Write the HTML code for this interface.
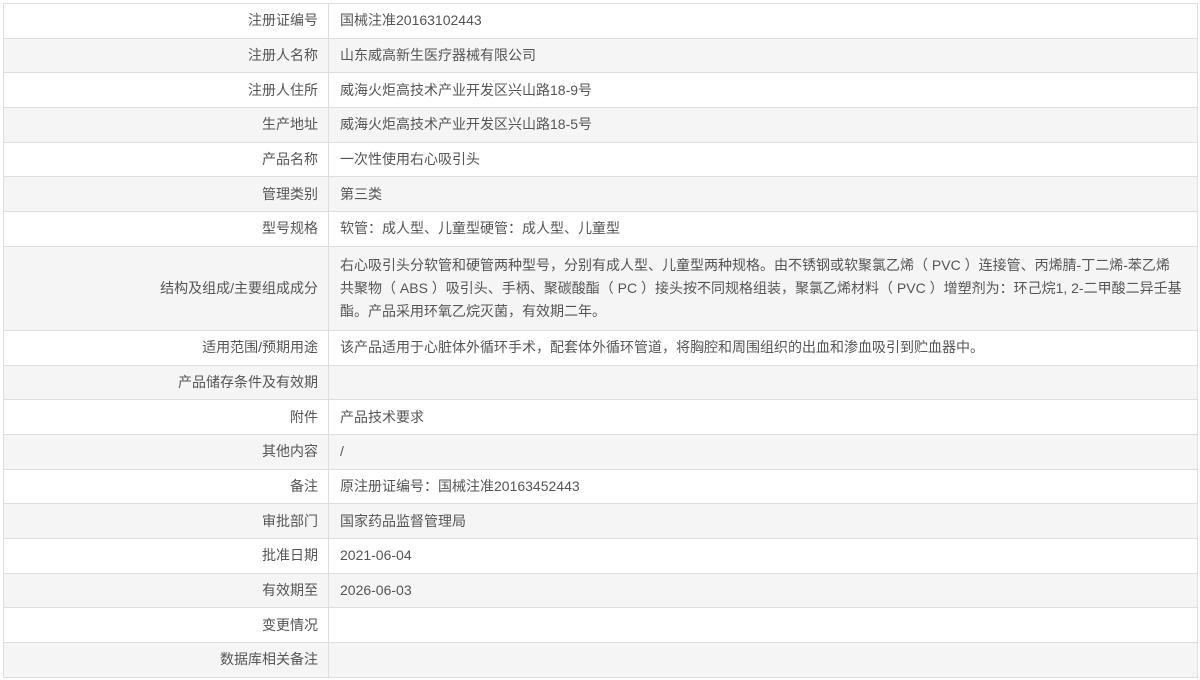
<!DOCTYPE html>
<html><head><meta charset="utf-8"><style>
body{margin:0;background:#fff;font-family:"Liberation Sans","Noto Sans CJK SC",sans-serif;font-size:14px;color:#555;}
table{position:absolute;left:3px;top:3px;width:1195px;border-collapse:collapse;}
td{border:1px solid #dedede;height:33.7px;padding:0;line-height:23px;}
td.l{width:314px;text-align:right;padding-right:10px;}
td.r{padding-left:11px;padding-right:6px;}
tr:nth-child(even) td{background:#f5f5f5;}
tr.t td{height:83px;}
</style></head><body>
<table>
<tr><td class="l">注册证编号</td><td class="r">国械注准20163102443</td></tr>
<tr><td class="l">注册人名称</td><td class="r">山东威高新生医疗器械有限公司</td></tr>
<tr><td class="l">注册人住所</td><td class="r">威海火炬高技术产业开发区兴山路18-9号</td></tr>
<tr><td class="l">生产地址</td><td class="r">威海火炬高技术产业开发区兴山路18-5号</td></tr>
<tr><td class="l">产品名称</td><td class="r">一次性使用右心吸引头</td></tr>
<tr><td class="l">管理类别</td><td class="r">第三类</td></tr>
<tr><td class="l">型号规格</td><td class="r">软管：成人型、儿童型硬管：成人型、儿童型</td></tr>
<tr class="t"><td class="l">结构及组成/主要组成成分</td><td class="r" style="white-space:nowrap">右心吸引头分软管和硬管两种型号，分别有成人型、儿童型两种规格。由不锈钢或软聚氯乙烯（ PVC ）连接管、丙烯腈-丁二烯-苯乙烯<br>共聚物（ ABS ）吸引头、手柄、聚碳酸酯（ PC ）接头按不同规格组装，聚氯乙烯材料（ PVC ）增塑剂为：环己烷1, 2-二甲酸二异壬基<br>酯。产品采用环氧乙烷灭菌，有效期二年。</td></tr>
<tr><td class="l">适用范围/预期用途</td><td class="r">该产品适用于心脏体外循环手术，配套体外循环管道，将胸腔和周围组织的出血和渗血吸引到贮血器中。</td></tr>
<tr><td class="l">产品储存条件及有效期</td><td class="r"></td></tr>
<tr><td class="l">附件</td><td class="r">产品技术要求</td></tr>
<tr><td class="l">其他内容</td><td class="r">/</td></tr>
<tr><td class="l">备注</td><td class="r">原注册证编号：国械注准20163452443</td></tr>
<tr><td class="l">审批部门</td><td class="r">国家药品监督管理局</td></tr>
<tr><td class="l">批准日期</td><td class="r">2021-06-04</td></tr>
<tr><td class="l">有效期至</td><td class="r">2026-06-03</td></tr>
<tr><td class="l">变更情况</td><td class="r"></td></tr>
<tr><td class="l">数据库相关备注</td><td class="r"></td></tr>
</table>
</body></html>
